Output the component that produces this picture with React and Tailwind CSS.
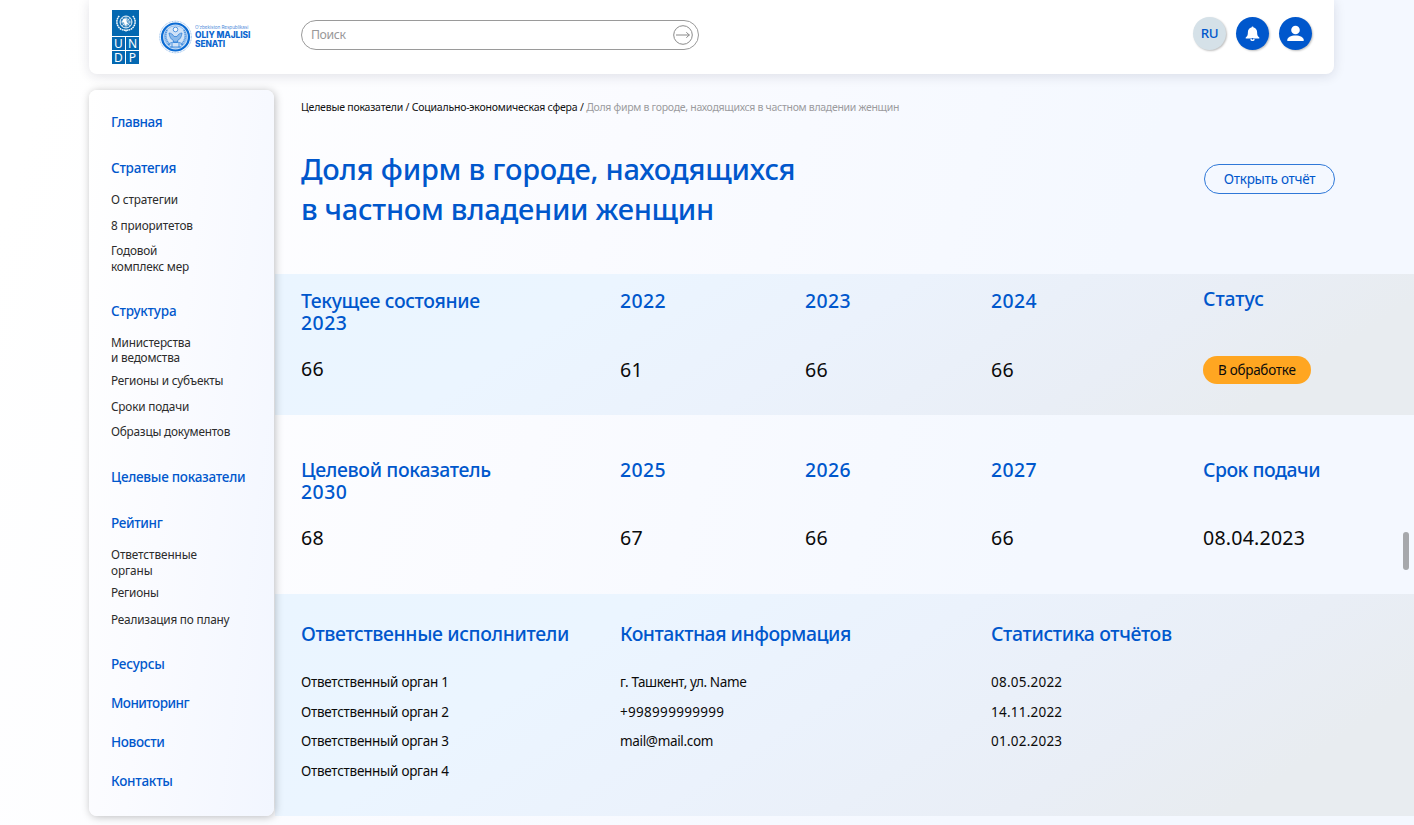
const NAV = [
  { t: ["Главная"], head: true, cls: "tracking-[-0.42px]" },
  { t: ["Стратегия"], head: true, cls: "mt-[30px] tracking-[-0.25px]" },
  { t: ["О стратегии"], cls: "mt-[16px] tracking-[-0.15px]" },
  { t: ["8 приоритетов"], cls: "mt-[10px] tracking-[-0.15px]" },
  { t: ["Годовой", "комплекс мер"], cls: "mt-[9.4px] tracking-[-0.2px]" },
  { t: ["Структура"], head: true, cls: "mt-[28.3px] tracking-[-0.2px]" },
  { t: ["Министерства", "и ведомства"], cls: "mt-[15.8px] tracking-[-0.2px]" },
  { t: ["Регионы и субъекты"], cls: "mt-[7px] tracking-[-0.2px]" },
  { t: ["Сроки подачи"], cls: "mt-[9.8px] tracking-[-0.2px]" },
  { t: ["Образцы документов"], cls: "mt-[9.8px] tracking-[-0.22px]" },
  { t: ["Целевые показатели"], head: true, cls: "mt-[29px] tracking-[-0.26px]" },
  { t: ["Рейтинг"], head: true, cls: "mt-[30px] tracking-[-0.35px]" },
  { t: ["Ответственные", "органы"], cls: "mt-[15.6px] tracking-[-0.1px]" },
  { t: ["Регионы"], cls: "mt-[6.6px] tracking-[-0.2px]" },
  { t: ["Реализация по плану"], cls: "mt-[11px] tracking-[-0.2px]" },
  { t: ["Ресурсы"], head: true, cls: "mt-[28.6px] tracking-[-0.25px]" },
  { t: ["Мониторинг"], head: true, cls: "mt-[22.9px] tracking-[-0.55px]" },
  { t: ["Новости"], head: true, cls: "mt-[22.9px] tracking-[-0.35px]" },
  { t: ["Контакты"], head: true, cls: "mt-[22.9px] tracking-[-0.25px]" },
];

const COLS = "grid grid-cols-[319px_185px_186px_212px_1fr] pl-[26px]";
const BAND =
  "bg-[linear-gradient(147deg,#eaf5ff_0%,#ebf5ff_26%,#ebf2fc_48%,#e9eef6_72%,#e8ecf0_87%,#e8ecf0_100%)]";
const HEAD = "text-[19.4px] leading-[22px] font-medium text-[#0057cc]";
const NUM = "text-[19.6px] leading-6 tracking-[0.2px] text-[#0b0b0b]";
const LINK = "text-[13.5px] leading-5 text-[#0b0b0b]";

function UndpLogo() {
  return (
    <div className="flex w-[27px] flex-col gap-px">
      <div className="flex h-[26px] items-center justify-center bg-[#0468b1]">
        <svg width="22" height="20" viewBox="0 0 22 20" fill="none" stroke="#fff">
          <circle cx="11" cy="9" r="6" strokeWidth="0.9" fill="#ffffff30" />
          <path d="M11 3v12M5 9h12M6.8 4.8l8.4 8.4M15.2 4.8l-8.4 8.4" strokeWidth="0.5" />
          <circle cx="11" cy="9" r="3.4" strokeWidth="0.6" />
          <path d="M9 5.5l3 1-1 2 2 2-3 2-1-3-2-1z" fill="#fff" stroke="none" />
          <path d="M4.3 3C.6 6.600 1.100 13 6 16.200c2 1.100 4 .6 5.600 1.900M17.700 3c3.700 3.600 3.200 10-1.700 13.200-2 1.100-4 .6-5.600 1.900" strokeWidth="1.500" strokeDasharray="1.800 .5" />
        </svg>
      </div>
      <div className="grid grid-cols-2 gap-px text-center text-[12px] leading-[13px] text-white">
        {["U", "N", "D", "P"].map((c) => (
          <span key={c} className="h-[13px] bg-[#0468b1]">{c}</span>
        ))}
      </div>
    </div>
  );
}

function SenateLogo() {
  return (
    <div className="flex items-center">
      <svg width="33" height="34" viewBox="0 0 33 34" fill="none" stroke="#0b6bd3">
        <circle cx="16.5" cy="17" r="15.8" strokeWidth="0.7" strokeDasharray="1 .6" opacity=".6" />
        <circle cx="16.5" cy="17" r="13.5" strokeWidth="2.2" fill="#cfe2f7" />
        <circle cx="16.5" cy="17" r="11.2" strokeWidth="0.5" opacity=".6" />
        <circle cx="16.5" cy="9.5" r="2.3" strokeWidth="0.8" fill="#fff" opacity=".8" />
        <path d="M8 10c-2.5 5-1.5 11 3 15M25 10c2.5 5 1.5 11-3 15" strokeWidth="2" strokeDasharray="1.3 .6" opacity=".6" />
        <path d="M10 13c2 0 4 1.500 5 3.500h3c1-2 3-3.500 5-3.500-.5 4-2 6.500-4.500 7.500v2h-4v-2C12 19.500 10.500 17 10 13z" strokeWidth="0.7" fill="#7fb2e8" opacity=".85" />
        <path d="M9 25c2-2.500 4.500-3 7.500-3s5.500.5 7.500 3M11 27h11M13 23v4M20 23v4" strokeWidth="0.9" opacity=".75" />
      </svg>
      <div className="-mt-px ml-[3px] font-['Inter',sans-serif] text-[#0c66cf]">
        <p className="text-[4.7px] leading-[7px] tracking-[-0.08px] whitespace-nowrap opacity-75">O‘zbekiston Respublikasi</p>
        <p className="text-[8.4px] leading-[9px] font-extrabold tracking-[-0.06px] whitespace-nowrap">OLIY MAJLISI</p>
        <p className="text-[8.4px] leading-[9px] font-extrabold tracking-[-0.12px]">SENATI</p>
      </div>
    </div>
  );
}

function Header() {
  const round = "flex size-[33px] items-center justify-center rounded-full shadow-[1px_1px_2px_rgba(0,0,0,0.25)]";
  return (
    <header className="ml-[89px] flex h-[74px] w-[1245px] shrink-0 items-start rounded-b-lg bg-white shadow-[0_2px_12px_rgba(30,30,60,0.13)]">
      <div className="mt-[10px] ml-[23px]"><UndpLogo /></div>
      <div className="mt-[20px] ml-[20px] w-[142px]"><SenateLogo /></div>
      <div className="mt-[20px] flex h-[30px] w-[398px] items-center justify-between rounded-full border border-[#9a9a9a] pr-[5px] pl-[9px]">
        <span className="text-[12.3px] tracking-[-0.4px] text-[#999]">Поиск</span>
        <svg width="20" height="20" viewBox="0 0 20 20" fill="none" stroke="#8a8a8a" strokeWidth="1">
          <circle cx="10" cy="10" r="9.3" />
          <path d="M3 10h13.500M13.300 7.300l3 2.700-3 2.700" />
        </svg>
      </div>
      <div className="mt-[17px] mr-[22px] ml-auto flex gap-[10px]">
        <div className={round + " bg-[#d5e1e8] text-[13.3px] font-medium tracking-[-0.3px] text-[#0057cc]"}>RU</div>
        <div className={round + " bg-[#0057cc]"}>
          <svg width="15" height="16" viewBox="0 0 15 16" fill="#fff">
            <path d="M7.500.5c.6 0 1 .4 1 .9 2.300.5 3.600 2.300 3.600 4.600 0 3 .5 4.300 2.200 5.500v.9H.7v-.9C2.400 10.300 2.900 9 2.900 6c0-2.300 1.300-4.100 3.600-4.600 0-.5.400-.9 1-.9z" />
            <path d="M5.300 12.900h4.400a2.200 2.200 0 0 1-4.400 0z" />
            <circle cx="7.5" cy="12.9" r=".8" fill="#0057cc" />
          </svg>
        </div>
        <div className={round + " bg-[#0057cc]"}>
          <svg width="17" height="17" viewBox="0 0 17 17" fill="#fff">
            <circle cx="8.5" cy="5" r="4.3" />
            <path d="M.3 16v-1.200c0-2.300 3.500-4.300 8.200-4.300s8.200 2 8.200 4.300V16z" />
          </svg>
        </div>
      </div>
    </header>
  );
}

function Sidebar() {
  return (
    <nav className="z-10 ml-[89px] h-[726px] w-[185px] shrink-0 rounded-lg bg-[linear-gradient(97deg,#ffffff_0%,#fafbff_45%,#f2f6ff_100%)] pt-[24px] pl-[22px] shadow-[1px_1px_8px_rgba(0,0,0,0.26)]">
      {NAV.map((n) => (
        <div
          key={n.t.join(" ")}
          className={
            (n.head
              ? "text-[13.5px] leading-4 font-medium whitespace-nowrap text-[#0057cc] "
              : "text-[11.8px] leading-[15.8px] whitespace-nowrap text-[#2c2c2c] ") + n.cls
          }
        >
          {n.t.map((l) => <p key={l}>{l}</p>)}
        </div>
      ))}
    </nav>
  );
}

export default function App() {
  return (
    <div className="relative flex h-[825px] w-[1414px] flex-col overflow-hidden bg-[linear-gradient(107deg,#ffffff_4%,#fafbff_40%,#f4f8ff_72%)] font-['Noto_Sans',sans-serif]">
      <Header />
      <div className="mt-4 flex">
        <Sidebar />
        <main className="flex-1">
          <section className="flex h-[184px] justify-between pl-[27px]">
            <div>
              <div className="mt-[9px] text-[10.5px] leading-4 whitespace-nowrap">
                <span className="tracking-[-0.21px] text-[#111]">Целевые показатели / Социально-экономическая сфера / </span>
                <span className="tracking-[-0.29px] text-[#9b9b9e]">Доля фирм в городе, находящихся в частном владении женщин</span>
              </div>
              <h1 className="mt-[34px] text-[29px] leading-10 font-medium text-[#0057cc]">
                <span className="block tracking-[-0.2px]">Доля фирм в городе, находящихся</span>
                <span className="block tracking-[-0.27px]">в частном владении женщин</span>
              </h1>
            </div>
            <button className="mt-[74px] mr-[79px] h-[30px] w-[131px] rounded-full border border-[#2f78d8] text-[13.5px] tracking-[-0.27px] text-[#0057cc]">
              Открыть отчёт
            </button>
          </section>

          <section className={COLS + " ml-px h-[141px] pt-4 " + BAND}>
            <div>
              <h2 className={HEAD + " h-[67px] tracking-[-0.35px]"}>Текущее состояние<br /><span className="tracking-[0.5px]">2023</span></h2>
              <p className={NUM}>66</p>
            </div>
            {[["2022", "61"], ["2023", "66"], ["2024", "66"]].map(([y, v]) => (
              <div key={y}>
                <h2 className={HEAD + " h-[68px] tracking-[0.45px]"}>{y}</h2>
                <p className={NUM}>{v}</p>
              </div>
            ))}
            <div>
              <h2 className={HEAD + " -mt-[2px] h-[68px] tracking-[-0.05px]"}>Статус</h2>
              <span className="flex h-7 w-[107.5px] items-center justify-center rounded-full bg-[#ffa621] text-[13.5px] tracking-[-0.27px] text-[#0b0b0b]">В обработке</span>
            </div>
          </section>

          <section className={COLS + " ml-px h-[179px] pt-[44px]"}>
            <div>
              <h2 className={HEAD + " h-[67px] tracking-[-0.34px]"}>Целевой показатель<br /><span className="tracking-[0.5px]">2030</span></h2>
              <p className={NUM}>68</p>
            </div>
            {[["2025", "67"], ["2026", "66"], ["2027", "66"]].map(([y, v]) => (
              <div key={y}>
                <h2 className={HEAD + " h-[67px] tracking-[0.45px]"}>{y}</h2>
                <p className={NUM}>{v}</p>
              </div>
            ))}
            <div>
              <h2 className={HEAD + " h-[67px] tracking-[-0.48px]"}>Срок подачи</h2>
              <p className={NUM}>08.04.2023</p>
            </div>
          </section>

          <section className={"ml-px grid h-[222px] grid-cols-[319px_371px_1fr] pt-[29px] pl-[26px] " + BAND}>
            <div>
              <h2 className={HEAD + " tracking-[-0.37px]"}>Ответственные исполнители</h2>
              <ul className={LINK + " mt-[27px] flex flex-col gap-[9.7px] tracking-[-0.28px]"}>
                {[1, 2, 3, 4].map((n) => <li key={n}>Ответственный орган {n}</li>)}
              </ul>
            </div>
            <div>
              <h2 className={HEAD + " tracking-[-0.47px]"}>Контактная информация</h2>
              <ul className={LINK + " mt-[27px] flex flex-col gap-[9.7px]"}>
                <li className="tracking-[-0.37px]">г. Ташкент, ул. Name</li>
                <li className="tracking-[0.3px]">+998999999999</li>
                <li className="tracking-[-0.33px]">mail@mail.com</li>
              </ul>
            </div>
            <div>
              <h2 className={HEAD + " tracking-[-0.34px]"}>Статистика отчётов</h2>
              <ul className={LINK + " mt-[27px] flex flex-col gap-[9.7px] tracking-[0.23px]"}>
                <li>08.05.2022</li>
                <li>14.11.2022</li>
                <li>01.02.2023</li>
              </ul>
            </div>
          </section>
        </main>
      </div>
      <div className="absolute top-[532px] right-[5px] h-[38px] w-[6px] rounded-full bg-[#a6a8ac]" />
    </div>
  );
}
